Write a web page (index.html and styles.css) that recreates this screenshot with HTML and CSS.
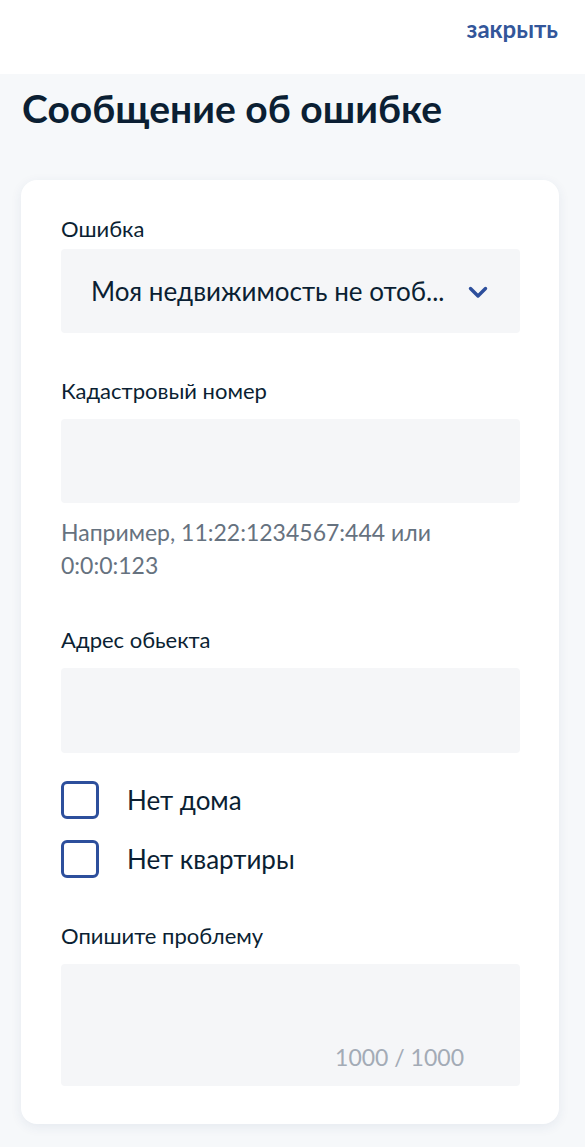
FILE: index.html
```html
<!DOCTYPE html>
<html lang="ru">
<head>
<meta charset="utf-8">
<link rel="stylesheet" href="styles.css">
</head>
<body>
<header class="topbar">
  <a class="close" href="#">закрыть</a>
</header>
<main class="page">
  <h1 class="title">Сообщение об ошибке</h1>
  <section class="card">
    <div class="field field-select">
      <div class="label">Ошибка</div>
      <div class="select">
        <span class="select-text">Моя недвижимость не отоб...</span>
        <svg class="chevron" width="20" height="13" viewBox="0 0 20 13"><path d="M2.5 2.5l7.5 7.5 7.5-7.5" fill="none" stroke="#2d4f9c" stroke-width="3.4" stroke-linecap="round" stroke-linejoin="round"/></svg>
      </div>
    </div>
    <div class="field">
      <div class="label">Кадастровый номер</div>
      <div class="input"></div>
      <div class="hint">Например, 11:22:1234567:444 или 0:0:0:123</div>
    </div>
    <div class="field field-after-hint">
      <div class="label">Адрес обьекта</div>
      <div class="input input-tall"></div>
    </div>
    <div class="checks">
      <label class="check"><span class="box"></span><span class="check-text">Нет дома</span></label>
      <label class="check"><span class="box"></span><span class="check-text">Нет квартиры</span></label>
    </div>
    <div class="field">
      <div class="label">Опишите проблему</div>
      <div class="textarea"><span class="counter">1000 / 1000</span></div>
    </div>
  </section>
</main>
</body>
</html>
```

FILE: styles.css
```css
* { box-sizing: border-box; }
html, body { margin: 0; padding: 0; }
body {
  font-family: Lato, "Open Sans", sans-serif;
  color: #0b1f33;
  background: #f5f7fa;
  width: 585px;
  min-height: 1147px;
}
.topbar {
  height: 74px;
  background: #ffffff;
  display: flex;
  justify-content: flex-end;
  align-items: flex-start;
  padding: 14px 27px 0 0;
}
.close {
  font-family: Lato, sans-serif;
  font-weight: 700;
  font-size: 24px;
  line-height: 30px;
  color: #33569a;
  text-decoration: none;
}
.page {
  padding: 11px 26px 24px 21px;
  background: #f6f8fa;
}
.title {
  margin: 0 0 49px 1px;
  font-size: 39px;
  line-height: 46px;
  font-weight: 700;
  color: #0b1f33;
}
.card {
  background: #ffffff;
  border-radius: 16px;
  box-shadow: 0 3px 12px rgba(40, 70, 120, 0.08);
  padding: 35px 39px 38px 40px;
  display: flex;
  flex-direction: column;
}
.field { display: flex; flex-direction: column; }
.label {
  font-size: 22px;
  line-height: 28px;
  margin-bottom: 14px;
}
.field-select .label { margin-bottom: 6px; }
.field + .field { margin-top: 44px; }
.field + .field-after-hint { margin-top: 44px; }
.select {
  height: 84px;
  background: #f5f6f8;
  border-radius: 4px;
  display: flex;
  align-items: center;
  justify-content: space-between;
  padding: 0 32px 0 30px;
}
.select-text { font-size: 26px; }
.chevron { margin-top: 3px; }
.input {
  height: 84px;
  background: #f5f6f8;
  border-radius: 4px;
}
.input-tall { height: 85px; }
.hint {
  margin-top: 13px;
  font-size: 23px;
  line-height: 33px;
  color: #66727f;
  padding-right: 40px;
}
.checks {
  margin-top: 28px;
  display: flex;
  flex-direction: column;
  gap: 21px;
}
.check {
  display: flex;
  align-items: center;
  gap: 28px;
}
.box {
  width: 38px;
  height: 38px;
  flex: none;
  border: 3px solid #2d4f9c;
  border-radius: 6px;
}
.check-text { font-size: 26px; }
.checks + .field { margin-top: 44px; }
.textarea {
  height: 122px;
  background: #f5f6f8;
  border-radius: 4px;
  display: flex;
  align-items: flex-end;
  justify-content: flex-end;
  padding: 0 56px 15px 0;
}
.counter {
  font-size: 23px;
  line-height: 28px;
  color: #a3abb6;
}
```
